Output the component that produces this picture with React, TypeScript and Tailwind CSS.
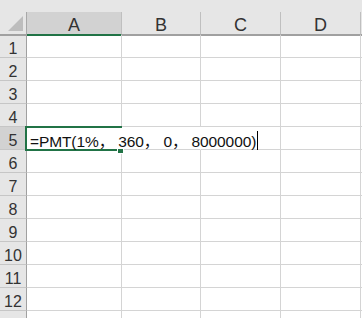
import React from "react";

const font = "font-['Liberation_Sans','Noto_Sans_CJK_SC',sans-serif]";

const cols = ["A", "B", "C", "D"];

export default function App() {
  const rows = Array.from({ length: 13 }, (_, i) => i + 1);
  return (
    <div className={`relative w-[362px] h-[318px] overflow-hidden bg-white ${font}`}>
      <div className="h-[12px] bg-[#e6e6e6]" />
      {/* column header */}
      <div className="grid grid-cols-[27px_95px_79px_80px_80px_1fr] h-[23px]">
        <div className="relative bg-[#e6e6e6] border-r border-r-[#a8a8a8] border-b-2 border-b-[#a0a0a0]">
          <svg className="absolute left-[8px] top-[4px]" width="16" height="16" viewBox="0 0 16 16">
            <polygon points="15,0 15,15 0,15" fill="#bdbdbd" />
          </svg>
        </div>
        {cols.map((c) => (
          <div
            key={c}
            className={`text-center text-[18px] leading-[18px] pt-[4px] text-[#333] border-r border-r-[#bfbfbf] border-b-2 ${
              c === "A" ? "bg-[#d2d2d2] border-b-[#217346]" : "bg-[#e6e6e6] border-b-[#a0a0a0]"
            }`}
          >
            {c}
          </div>
        ))}
        <div className="bg-[#e6e6e6] border-b-2 border-b-[#a0a0a0]" />
      </div>
      {rows.map((r) => (
        <div key={r} className="grid grid-cols-[27px_95px_79px_80px_80px_1fr] h-[23px]">
          <div
            className={`flex items-end justify-center text-[16px] leading-none text-[#333] border-r border-r-[#a0a0a0] border-b border-b-[#c6c6c6] ${
              r === 5 ? "bg-[#d2d2d2]" : "bg-[#e6e6e6]"
            }`}
          >
            {r}
          </div>
          {r === 5 ? (
            <>
              <div className="relative flex items-end pl-[3px] border-b border-b-[#d4d4d4] border-r border-r-white overflow-visible">
                <span className="relative z-30 whitespace-nowrap text-[15.5px] tracking-[-0.1px] leading-none text-[#111] flex items-end">
                  <span>=PMT(1%， 360， 0， 8000000)</span>
                  <span className="inline-block w-[1px] h-[19px] bg-black ml-[1px] mb-[-1px]" />
                </span>
              </div>
              <div className="border-b border-b-[#d4d4d4] border-r border-r-white" />
              <div className="border-b border-b-[#d4d4d4] border-r border-r-[#d4d4d4]" />
              <div className="border-b border-b-[#d4d4d4] border-r border-r-[#d4d4d4]" />
              <div className="border-b border-b-[#d4d4d4]" />
            </>
          ) : (
            <>
              <div className="border-b border-b-[#d4d4d4] border-r border-r-[#d4d4d4]" />
              <div className="border-b border-b-[#d4d4d4] border-r border-r-[#d4d4d4]" />
              <div className="border-b border-b-[#d4d4d4] border-r border-r-[#d4d4d4]" />
              <div className="border-b border-b-[#d4d4d4] border-r border-r-[#d4d4d4]" />
              <div className="border-b border-b-[#d4d4d4]" />
            </>
          )}
        </div>
      ))}
      {/* selection box */}
      <div className="absolute left-[25px] top-[126px] w-[97px] h-[25px] border-2 border-r-0 border-[#217346] pointer-events-none z-20" />
      <div className="absolute left-[117px] top-[148px] w-[7px] h-[6px] bg-[#217346] border border-white z-30" />
    </div>
  );
}
